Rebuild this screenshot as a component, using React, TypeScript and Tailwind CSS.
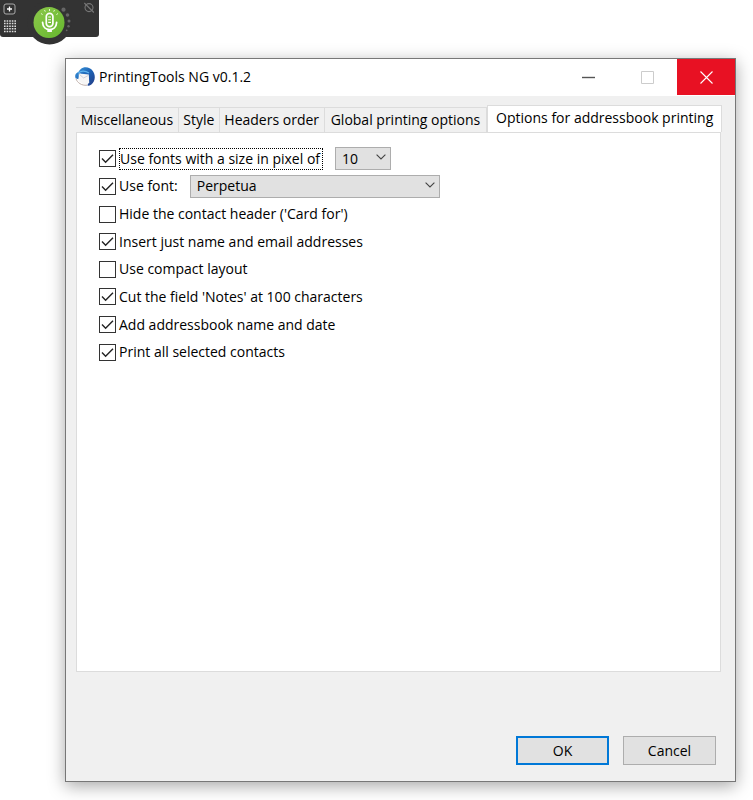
import { useState } from "react";
import type { ReactNode } from "react";

const tabs = [
  "Miscellaneous",
  "Style",
  "Headers order",
  "Global printing options",
  "Options for addressbook printing",
];

const fontSizes = ["8", "9", "10", "11", "12", "14"];
const fonts = ["Perpetua", "Arial", "Calibri", "Verdana"];

function CheckRow({
  id,
  label,
  checked,
  focused,
  children,
}: {
  id: string;
  label: string;
  checked?: boolean;
  focused?: boolean;
  children?: ReactNode;
}) {
  return (
    <div className="flex items-center">
      <span className="relative block w-[17px] h-[17px] shrink-0">
        <input
          id={id}
          type="checkbox"
          defaultChecked={checked}
          className="peer block w-full h-full appearance-none border border-[#333] bg-white"
        />
        <svg
          viewBox="0 0 17 17"
          fill="none"
          stroke="#222"
          strokeWidth="1.4"
          className="absolute inset-0 hidden pointer-events-none peer-checked:block"
        >
          <path d="M3 8.6 6.6 12.2 14 4.8" />
        </svg>
      </span>
      <label
        htmlFor={id}
        className={
          focused
            ? "ml-[3px] pr-[2px] border border-dotted border-black whitespace-nowrap leading-5"
            : "ml-[3px] whitespace-nowrap leading-5"
        }
      >
        {label}
      </label>
      {children}
    </div>
  );
}

function Dropdown({
  label,
  options,
  value,
  className,
}: {
  label: string;
  options: string[];
  value: string;
  className: string;
}) {
  return (
    <span className={`relative block ml-3 ${className}`}>
      <select
        aria-label={label}
        defaultValue={value}
        className="block w-full h-[23px] pl-[6px] appearance-none border border-[#adadad] bg-[#e1e1e1] leading-5"
      >
        {options.map((option) => (
          <option key={option}>{option}</option>
        ))}
      </select>
      <svg
        viewBox="0 0 10 6"
        fill="none"
        stroke="#444"
        strokeWidth="1.1"
        className="absolute right-[5px] top-[7px] w-[10px] h-[6px] pointer-events-none"
      >
        <path d="M.6.6 5 5 9.4.6" />
      </svg>
    </span>
  );
}

function DictationBar() {
  return (
    <svg viewBox="0 0 100 46" className="block w-[100px] h-[46px]">
      <defs>
        <linearGradient id="mic" x1="0" y1="0" x2="1" y2="1">
          <stop offset="0" stopColor="#8cc84b" />
          <stop offset="1" stopColor="#66b82e" />
        </linearGradient>
      </defs>
      <path d="M0 0H99V34Q99 37 96 37H3Q0 37 0 34Z" fill="#333" />
      <circle cx="49.5" cy="22.5" r="22" fill="#333" />
      <rect x="4" y="4" width="11" height="10" rx="2" fill="none" stroke="#aaa" />
      <path d="M9.5 6.5V11.5M7 9H12" stroke="#fff" strokeWidth="1.3" />
      <path
        d="M4 21H16M4 23.6H16M4 26.2H16M4 28.8H16M4 31.4H16"
        stroke="#ddd"
        strokeWidth="1.5"
        strokeDasharray="1.6 1"
      />
      <circle cx="49" cy="22.5" r="15.5" fill="url(#mic)" />
      <rect x="46.3" y="13.3" width="6.6" height="13.4" rx="3.3" fill="#76bd3b" stroke="#fff" strokeWidth="1.7" />
      <path d="M48.2 17H51M48.2 19.7H51M48.2 22.4H51" stroke="#fff" strokeWidth="1.1" />
      <path d="M42.6 22.5C43 32 56.2 32 56.6 22.5" fill="none" stroke="#fff" strokeWidth="1.8" strokeLinecap="round" />
      <path d="M47.3 29.5H51.9V32H47.3Z" fill="#fff" />
      <path
        d="M49.5 9V11M44.5 10 45.3 11.7M54.5 10 53.7 11.7M41 13.5 42.6 14.6M58 13.5 56.4 14.6"
        stroke="#e4f4d4"
      />
      <circle cx="63.5" cy="9.7" r="2.1" fill="#666" />
      <circle cx="67.5" cy="15" r="1.8" fill="#666" />
      <circle cx="69" cy="21" r="1.5" fill="#666" />
      <circle cx="68.5" cy="26.3" r="1.2" fill="#666" />
      <circle cx="66.7" cy="30.3" r=".9" fill="#666" />
      <circle cx="89" cy="7.6" r="4" fill="none" stroke="#777" strokeWidth="1.1" />
      <path d="M84.3 3 93.8 12.5" stroke="#777" strokeWidth="1.1" />
    </svg>
  );
}

function ThunderbirdIcon() {
  return (
    <svg viewBox="0 0 20 20" className="w-5 h-5 shrink-0">
      <defs>
        <linearGradient id="bird" x1="0" y1="0" x2="1" y2="1">
          <stop offset="0" stopColor="#3b9be0" />
          <stop offset=".5" stopColor="#1e62b4" />
          <stop offset="1" stopColor="#233c85" />
        </linearGradient>
      </defs>
      <path
        d="M5.6 2.2C9-.7 14.8-.2 17.8 4 21 8.5 20.2 14.6 16.4 17.4 15 18.4 13.6 18.8 12.4 18.6L14 11 5 6.6 3.4 12.2.6 11.2C-.4 9 .4 6.8 2.4 5.6 3.8 4.8 4.4 3.2 5.6 2.2Z"
        fill="url(#bird)"
      />
      <path d="M3.8 6.6 13.8 7.6 14.2 15.4 12.6 17.6 8.6 17.2 3.6 14Z" fill="#f7f6f5" />
      <path d="M1 11.8C2.2 15.6 6.6 18.8 12 18.2" fill="none" stroke="#b09c94" strokeWidth=".8" />
      <path d="M4.4 7.4 8.6 11 13.4 8.4" fill="none" stroke="#c3c8d4" strokeWidth=".8" />
      <path d="M3.2 6.2C5.4 3.6 10 3.2 14 6" fill="none" stroke="#60b5ef" strokeWidth="1.2" />
    </svg>
  );
}

export default function App() {
  const [active, setActive] = useState(4);

  return (
    <div className="min-h-screen flex flex-col bg-white text-black text-sm font-['Open_Sans','Noto_Sans',sans-serif]">
      <header className="h-[37px]">
        <DictationBar />
      </header>
      <main
        role="dialog"
        aria-label="PrintingTools NG"
        className="flex-1 flex flex-col mt-[21px] ml-[65px] mr-[17px] mb-[18px] border border-[#777] bg-[#f0f0f0] shadow-[0_4px_16px_rgba(0,0,0,0.35)]"
      >
        <div className="flex h-[37px] pl-[9px] bg-white">
          <div className="flex-1 flex items-center gap-1 h-9">
            <ThunderbirdIcon />
            <h1>PrintingTools NG v0.1.2</h1>
          </div>
          <button aria-label="Minimize" className="flex items-center justify-center w-[58px] h-9">
            <svg viewBox="0 0 13 13" className="w-[13px] h-[13px]">
              <path d="M0 6.5H13" stroke="#555" strokeWidth="1.4" />
            </svg>
          </button>
          <button aria-label="Maximize" disabled className="flex items-center justify-center w-[60px] h-9">
            <svg viewBox="0 0 13 13" className="w-[13px] h-[13px]">
              <path d="M.5.5H12.5V12.5H.5Z" fill="none" stroke="#ccc" />
            </svg>
          </button>
          <button aria-label="Close" className="flex items-center justify-center w-[58px] h-9 bg-[#e81123]">
            <svg viewBox="0 0 13 13" className="w-[13px] h-[13px]">
              <path d="M.5.5 12.5 12.5M12.5.5.5 12.5" stroke="#fff" strokeWidth="1.1" />
            </svg>
          </button>
        </div>
        <div
          role="tablist"
          className="grid grid-cols-[103fr_41fr_105fr_163fr_235fr] items-end h-9 ml-[10px] mr-[13px]"
        >
          {tabs.map((tab, i) => (
            <button
              key={tab}
              role="tab"
              aria-selected={active === i}
              onClick={() => setActive(i)}
              className={
                active === i
                  ? "h-[27px] pb-[2px] bg-white border border-b-0 border-[#dcdcdc] whitespace-nowrap leading-5"
                  : "h-[25px] bg-[#f0f0f0] border-t border-r border-[#dcdcdc] whitespace-nowrap leading-5"
              }
            >
              {tab}
            </button>
          ))}
        </div>
        <section role="tabpanel" className="flex-1 ml-[10px] mr-[14px] pt-3 pb-6 pl-[22px] bg-white border border-[#dcdcdc]">
          <div className="grid grid-rows-8 h-[221px]">
            <CheckRow id="size" label="Use fonts with a size in pixel of" checked focused>
              <Dropdown label="Font size" options={fontSizes} value="10" className="w-14" />
            </CheckRow>
            <CheckRow id="font" label="Use font:" checked>
              <Dropdown label="Font" options={fonts} value="Perpetua" className="w-[250px]" />
            </CheckRow>
            <CheckRow id="hide" label="Hide the contact header ('Card for')" />
            <CheckRow id="just" label="Insert just name and email addresses" checked />
            <CheckRow id="compact" label="Use compact layout" />
            <CheckRow id="cut" label="Cut the field 'Notes' at 100 characters" checked />
            <CheckRow id="date" label="Add addressbook name and date" checked />
            <CheckRow id="all" label="Print all selected contacts" checked />
          </div>
        </section>
        <footer className="flex justify-end gap-[14px] pt-16 pb-4 pr-[19px]">
          <button className="w-[93px] h-[29px] border-2 border-[#0078d7] bg-[#e1e1e1]">OK</button>
          <button className="w-[93px] h-[29px] border border-[#adadad] bg-[#e1e1e1]">Cancel</button>
        </footer>
      </main>
    </div>
  );
}
